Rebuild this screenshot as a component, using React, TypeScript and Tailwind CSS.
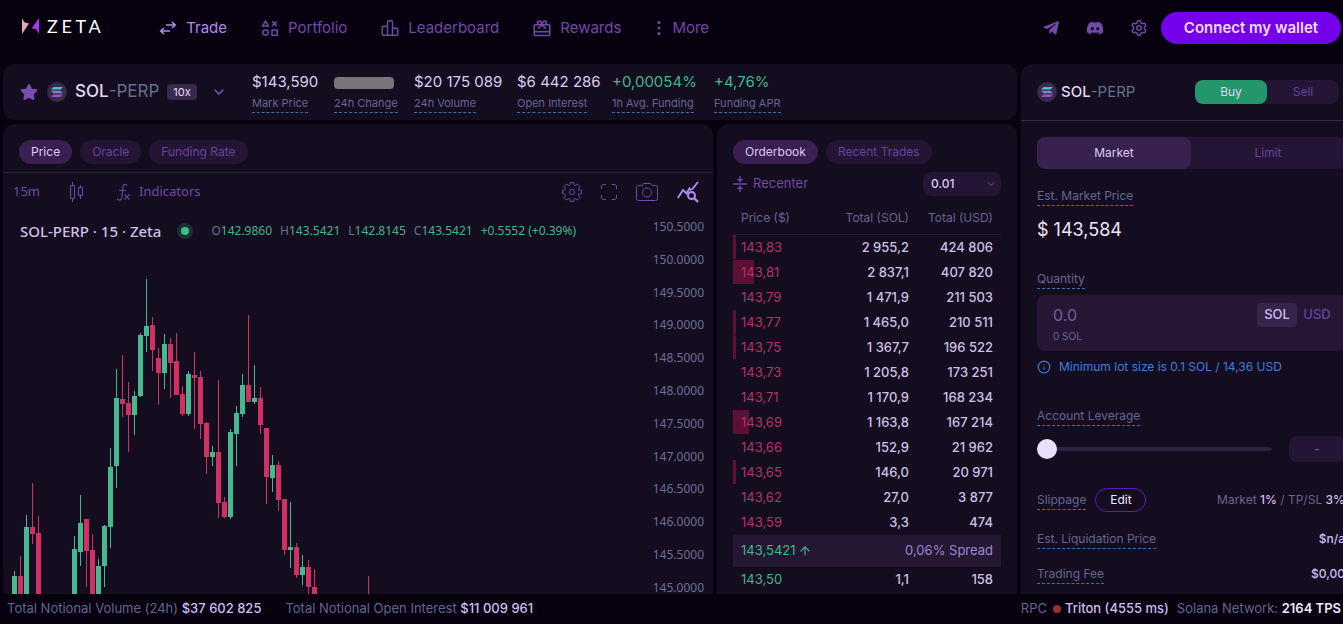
import { useState } from "react";
import type { ReactNode } from "react";
import { ArrowUp, ChevronDown, Info, Settings } from "lucide-react";
import { FaDiscord, FaStar, FaTelegramPlane } from "react-icons/fa";

type Candle = {
  slot: number;
  up?: boolean;
  body: [number, number];
  wick: [number, number];
};

const BOTTOM = 390;

const candles: Candle[] = [
  { slot: 0, up: true, body: [365, BOTTOM], wick: [360, BOTTOM] },
  { slot: 1, body: [365, BOTTOM], wick: [345, BOTTOM] },
  { slot: 2, up: true, body: [316, BOTTOM], wick: [304, BOTTOM] },
  { slot: 3, body: [316, 323], wick: [272, 333] },
  { slot: 4, body: [322, BOTTOM], wick: [305, BOTTOM] },
  { slot: 10, up: true, body: [338, BOTTOM], wick: [325, BOTTOM] },
  { slot: 11, up: true, body: [312, 341], wick: [284, 355] },
  { slot: 12, body: [308, 340], wick: [308, 376] },
  { slot: 13, body: [339, BOTTOM], wick: [323, BOTTOM] },
  { slot: 14, up: true, body: [355, BOTTOM], wick: [348, BOTTOM] },
  { slot: 15, up: true, body: [315, 355], wick: [314, 376] },
  { slot: 16, up: true, body: [256, 316], wick: [237, 337] },
  { slot: 17, up: true, body: [187, 255], wick: [158, 277] },
  { slot: 18, body: [188, 193], wick: [144, 206] },
  { slot: 19, body: [192, 204], wick: [171, 241] },
  { slot: 20, up: true, body: [185, 204], wick: [180, 224] },
  { slot: 21, up: true, body: [124, 185], wick: [122, 186] },
  { slot: 22, up: true, body: [115, 125], wick: [68, 141] },
  { slot: 23, body: [114, 139], wick: [106, 160] },
  { slot: 24, body: [147, 162], wick: [137, 194] },
  { slot: 25, up: true, body: [133, 162], wick: [123, 178] },
  { slot: 26, body: [133, 152], wick: [127, 187] },
  { slot: 27, body: [150, 184], wick: [122, 184] },
  { slot: 28, body: [183, 203], wick: [175, 205] },
  { slot: 29, up: true, body: [163, 203], wick: [160, 205] },
  { slot: 30, body: [164, 167], wick: [141, 218] },
  { slot: 31, body: [166, 213], wick: [160, 228] },
  { slot: 32, body: [212, 246], wick: [211, 263] },
  { slot: 33, up: true, body: [241, 246], wick: [235, 255] },
  { slot: 34, body: [241, 292], wick: [169, 307] },
  { slot: 35, body: [291, 306], wick: [286, 307] },
  { slot: 36, up: true, body: [221, 306], wick: [218, 308] },
  { slot: 37, up: true, body: [202, 223], wick: [195, 255] },
  { slot: 38, up: true, body: [174, 203], wick: [163, 206] },
  { slot: 39, body: [174, 191], wick: [104, 191] },
  { slot: 40, up: true, body: [187, 191], wick: [154, 193] },
  { slot: 41, body: [187, 214], wick: [176, 223] },
  { slot: 42, body: [217, 266], wick: [217, 293] },
  { slot: 43, up: true, body: [254, 267], wick: [244, 281] },
  { slot: 44, body: [254, 289], wick: [250, 300] },
  { slot: 45, body: [288, 339], wick: [288, 344] },
  { slot: 46, up: true, body: [336, 339], wick: [291, 357] },
  { slot: 47, body: [336, 364], wick: [332, 367] },
  { slot: 48, up: true, body: [356, 364], wick: [344, 374] },
  { slot: 49, body: [356, 376], wick: [349, BOTTOM] },
  { slot: 50, body: [376, BOTTOM], wick: [358, BOTTOM] },
  { slot: 59, body: [BOTTOM, BOTTOM], wick: [365, BOTTOM] },
];

const axisPrices = Array.from({ length: 12 }, (_, i) => 150.5 - i * 0.5);

const asks = [
  { price: "143,83", sol: "2 955,2", usd: "424 806", depth: 3 },
  { price: "143,81", sol: "2 837,1", usd: "407 820", depth: 21 },
  { price: "143,79", sol: "1 471,9", usd: "211 503", depth: 0 },
  { price: "143,77", sol: "1 465,0", usd: "210 511", depth: 3 },
  { price: "143,75", sol: "1 367,7", usd: "196 522", depth: 3 },
  { price: "143,73", sol: "1 205,8", usd: "173 251", depth: 0 },
  { price: "143,71", sol: "1 170,9", usd: "168 234", depth: 0 },
  { price: "143,69", sol: "1 163,8", usd: "167 214", depth: 16 },
  { price: "143,66", sol: "152,9", usd: "21 962", depth: 0 },
  { price: "143,65", sol: "146,0", usd: "20 971", depth: 3 },
  { price: "143,62", sol: "27,0", usd: "3 877", depth: 0 },
  { price: "143,59", sol: "3,3", usd: "474", depth: 0 },
];

const stats = [
  { label: "Mark Price", value: "$143,590", color: "text-[#dccdf3]" },
  { label: "24h Change", value: "", color: "" },
  { label: "24h Volume", value: "$20 175 089", color: "text-[#dccdf3]" },
  { label: "Open Interest", value: "$6 442 286", color: "text-[#dccdf3]" },
  { label: "1h Avg. Funding", value: "+0,00054%", color: "text-[#43b58c]" },
  { label: "Funding APR", value: "+4,76%", color: "text-[#43b58c]" },
];

const ohlc = [
  ["O", "142.9860"],
  ["H", "143.5421"],
  ["L", "142.8145"],
  ["C", "143.5421"],
];

const TradeIcon = () => (
  <svg className="h-[18px] w-[18px]" viewBox="0 0 18 18" fill="none" stroke="currentColor" strokeWidth="1.6">
    <path d="M7 6h9M13 3l3.2 3L13 9M11 12H2M5 9l-3.2 3L5 15" />
  </svg>
);

const PortfolioIcon = () => (
  <svg className="h-[18px] w-[18px]" viewBox="0 0 18 18" fill="none" stroke="currentColor" strokeWidth="1.5">
    <path d="M4.5 2.2 7.4 7H1.6zM11.2 2.400l4.600 4.600M15.800 2.400 11.200 7M11 11h5.200v5.200H11z" />
    <circle cx="4.5" cy="13.6" r="2.700" />
  </svg>
);

const LeaderboardIcon = () => (
  <svg className="h-[18px] w-[18px]" viewBox="0 0 18 18" fill="none" stroke="currentColor" strokeWidth="1.4" strokeLinejoin="round">
    <path d="M6.5 16.3V3.2q0-1.4 1.4-1.4h2.2q1.4 0 1.4 1.4v13.1M6.5 7.3H2.2Q1.2 7.3 1.2 8.3v7q0 1 1 1h13.6q1 0 1-1v-5q0-1-1-1h-4.3" />
  </svg>
);

const RewardsIcon = () => (
  <svg className="h-[18px] w-[18px]" viewBox="0 0 18 18" fill="none" stroke="currentColor" strokeWidth="1.5" strokeLinejoin="round">
    <path d="M2.2 5.7h13.6q1 0 1 1v8.6q0 1.2-1.2 1.2H2.4q-1.2 0-1.2-1.2V6.7q0-1 1-1zM1.2 12.7h15.6M9 5.7 5.2 9.8M9 5.7l3.8 4.1" />
    <path d="M9 5.2C8.4 3 7.4 2 6.2 2 3.9 2 4 5.2 6.2 5.4M9 5.2C9.6 3 10.6 2 11.8 2c2.3 0 2.2 3.2 0 3.4" />
  </svg>
);

const MoreIcon = () => (
  <svg className="h-[18px] w-2" viewBox="0 0 8 18" fill="currentColor">
    <circle cx="4" cy="3.5" r="1.5" />
    <circle cx="4" cy="9" r="1.5" />
    <circle cx="4" cy="14.5" r="1.5" />
  </svg>
);

const ZetaMark = () => (
  <svg className="h-4 w-[17px]" viewBox="0 0 17 16">
    <path d="M0 0v16L7 5.500 2.200 4.200z" fill="#e9a6b4" />
    <path d="M17 16V0L9.800 10.200l4.500 1z" fill="#a23af0" />
  </svg>
);

const SolanaLogo = () => (
  <svg className="h-5 w-5 shrink-0" viewBox="0 0 20 20">
    <circle cx="10" cy="10" r="10" fill="#392a4b" />
    <path d="M6.5 5H16l-2.500 2.600H4z" fill="#46bfc4" />
    <path d="M4 8.700h9.500l2.500 2.600H6.500z" fill="#7d82cf" />
    <path d="M6.5 12.400H16L13.500 15H4z" fill="#9c4ec6" />
  </svg>
);

const CandlesIcon = () => (
  <svg className="h-5 w-[18px]" viewBox="0 0 18 20" fill="none" stroke="currentColor">
    <path d="M2.5 3.5h4v13h-4zM4.5 0v3.5M4.5 16.500V20M10.500 5.500h4v8h-4zM12.500 3v2.500M12.500 13.500V17" />
  </svg>
);

const FormulaIcon = () => (
  <svg className="h-5 w-[15px]" viewBox="0 0 15 20" fill="none" stroke="currentColor" strokeWidth="1.1">
    <path d="M11 3.800C10.800 1.800 7.500 1.300 7 4.500L6 15.500C5.600 18.600 2 18.800 1.200 16.500M3 8.500h7M8.500 12.500l5 5M13.500 12.500l-5 5" />
  </svg>
);

const ChartGearIcon = () => (
  <svg className="h-5 w-5" viewBox="0 0 20 20" fill="none" stroke="currentColor" strokeLinejoin="round">
    <path d="M8.300.5h3.400l.4 2.500 1.300.5 2-1.500 2.500 2.500-1.500 2.100.6 1.300 2.500.4v3.400l-2.500.4-.6 1.300 1.500 2.100-2.500 2.500-2-1.500-1.300.500-.4 2.500H8.300L7.900 17l-1.300-.5-2.100 1.500L2 15.500l1.500-2.100-.5-1.300-2.500-.4V8.300L3 7.900l.5-1.300L2 4.500 4.500 2l2.100 1.500L7.900 3z" />
    <circle cx="10" cy="10" r="2.500" />
  </svg>
);

const FullscreenIcon = () => (
  <svg className="h-4 w-4" viewBox="0 0 16 16" fill="none" stroke="currentColor">
    <path d="M.5 5V2.500q0-2 2-2H5M11 .5h2.500q2 0 2 2V5M15.500 11v2.500q0 2-2 2H11M5 15.500H2.500q-2 0-2-2V11" />
  </svg>
);

const CameraIcon = () => (
  <svg className="h-[18px] w-[22px]" viewBox="0 0 22 18" fill="none" stroke="currentColor" strokeLinejoin="round">
    <path d="M7.500.5h7l1.500 2h3.500q2 0 2 2v11q0 2-2 2h-17q-2 0-2-2v-11q0-2 2-2H6z" />
    <circle cx="11" cy="9.500" r="4.500" />
  </svg>
);

const QueryStatsIcon = () => (
  <svg className="h-[22px] w-[22px]" viewBox="0 0 22 22" fill="none" stroke="currentColor" strokeWidth="2">
    <path d="M.8 17 6 9l3.500 3.500 3-5 2 1.800M15 8.500l6-7.500" />
    <circle cx="14.500" cy="14.500" r="3.500" />
    <path d="m17 17 4 4" strokeWidth="2.400" />
  </svg>
);

const RecenterIcon = () => (
  <svg className="h-4 w-3.5" viewBox="0 0 14 16" fill="none" stroke="currentColor" strokeWidth="1.4">
    <path d="M0 8h14M7 0v5M4.500 3 7 5.400 9.500 3M7 16v-5M4.500 13 7 10.600 9.500 13" />
  </svg>
);

const navItems = [
  { label: "Trade", icon: <TradeIcon />, active: true },
  { label: "Portfolio", icon: <PortfolioIcon /> },
  { label: "Leaderboard", icon: <LeaderboardIcon /> },
  { label: "Rewards", icon: <RewardsIcon /> },
  { label: "More", icon: <MoreIcon /> },
];

const Hint = ({ children }: { children: ReactNode }) => (
  <span className="inline-block whitespace-nowrap border-b border-dashed border-[#3c70ab] leading-[18px] text-[#646690]">
    {children}
  </span>
);

const PillTabs = ({ items }: { items: string[] }) => {
  const [active, setActive] = useState(items[0]);
  return (
    <div className="flex gap-2">
      {items.map((item) => (
        <button
          key={item}
          onClick={() => setActive(item)}
          className={`h-6 whitespace-nowrap rounded-full px-3 text-xs ${
            item === active
              ? "bg-[#391f52] text-[#dccdf3]"
              : "bg-[#231533] text-[#6a429f]"
          }`}
        >
          {item}
        </button>
      ))}
    </div>
  );
};

const MarketName = () => (
  <span className="whitespace-nowrap text-[#66718f]">
    <span className="font-medium text-[#e4d8f5]">SOL</span>-PERP
  </span>
);

const Header = () => (
  <header className="flex h-14 shrink-0 items-center pl-[22px] pr-0.5">
    <a href="#" className="flex items-center gap-2 pb-1 text-white" aria-label="Zeta">
      <ZetaMark />
      <span className="font-['Lato',sans-serif] text-lg tracking-[0.2em]">ZETA</span>
    </a>
    <nav className="ml-[55px] flex items-center gap-[34px]">
      {navItems.map((item) => (
        <a
          key={item.label}
          href="#"
          className={`flex items-center gap-[9px] text-[15px] ${
            item.active ? "text-[#b18af0]" : "text-[#704aa8]"
          }`}
        >
          {item.icon}
          {item.label}
        </a>
      ))}
    </nav>
    <div className="ml-auto flex items-center text-[#704aa8]">
      <div className="flex gap-[26px] pr-[13px]">
        <a href="#" aria-label="Telegram">
          <FaTelegramPlane className="h-[18px] w-[18px]" />
        </a>
        <a href="#" aria-label="Discord">
          <FaDiscord className="h-[18px] w-[18px]" />
        </a>
        <button aria-label="Settings">
          <Settings className="h-[18px] w-[18px]" />
        </button>
      </div>
      <button className="h-8 w-[180px] rounded-full bg-[#7500ea] text-[15px] font-semibold text-[#f0dcff]">
        Connect my wallet
      </button>
    </div>
  </header>
);

const MarketBar = () => (
  <section className="flex h-14 shrink-0 items-center rounded-xl bg-[#140c1f] pl-[17px]">
    <FaStar className="h-[18px] w-[18px] text-[#774fb2]" />
    <button className="ml-[9px] flex w-[180px] items-center text-[17px]">
      <SolanaLogo />
      <span className="ml-2">
        <MarketName />
      </span>
      <span className="ml-2 h-4 rounded bg-[#392a4b] px-1.5 text-[11px] leading-4 text-[#eadffa]">10x</span>
      <ChevronDown className="ml-auto h-4 w-4 text-[#8257c2]" />
    </button>
    <dl className="ml-[25px] grid grid-cols-[70px_68px_91px_83px_90px_75px] gap-3">
      {stats.map((stat) => (
        <div key={stat.label} className="flex flex-col-reverse">
          <dt className="text-[11px] leading-[18px]">
            <Hint>{stat.label}</Hint>
          </dt>
          <dd className={`flex h-[22px] items-center whitespace-nowrap text-[15px] ${stat.color}`}>
            {stat.value || <span className="h-3 w-[60px] rounded bg-[#77757b]" />}
          </dd>
        </div>
      ))}
    </dl>
  </section>
);

const PriceChart = () => (
  <section className="flex min-w-0 flex-1 flex-col overflow-hidden rounded-t-xl bg-[#140c1f]">
    <div className="border-b border-[#2e2638] px-4 pb-2 pt-4">
      <PillTabs items={["Price", "Oracle", "Funding Rate"]} />
    </div>
    <div className="flex h-[38px] shrink-0 items-center justify-between pl-2.5 pr-3.5 font-['Noto_Sans',sans-serif] text-[13px] text-[#704aa8]">
      <div className="flex items-center">
        <button>15m</button>
        <button aria-label="Candles" className="ml-7">
          <CandlesIcon />
        </button>
        <button className="ml-[30px] flex items-center gap-2">
          <FormulaIcon />
          Indicators
        </button>
      </div>
      <div className="flex items-center gap-[19px]">
        <button aria-label="Chart settings">
          <ChartGearIcon />
        </button>
        <button aria-label="Fullscreen">
          <FullscreenIcon />
        </button>
        <button aria-label="Take a snapshot">
          <CameraIcon />
        </button>
        <button aria-label="Search chart" className="text-[#b18af0]">
          <QueryStatsIcon />
        </button>
      </div>
    </div>
    <div className="relative flex min-h-0 flex-1 font-['Noto_Sans',sans-serif]">
      <svg className="h-full min-w-0 flex-1">
        {candles.map(({ slot, up, body, wick }) => (
          <g key={slot} fill={up ? "#48b890" : "#d03062"}>
            <rect x={11 + slot * 6} y={wick[0]} width={1} height={wick[1] - wick[0]} />
            <rect x={9 + slot * 6} y={body[0]} width={5} height={body[1] - body[0]} />
          </g>
        ))}
      </svg>
      <svg className="h-full w-[60px] shrink-0 text-xs" fill="#6c7094">
        {axisPrices.map((price, i) => (
          <text key={price} x={51} y={20 + Math.round(i * 32.8)} textAnchor="end">
            {price.toFixed(4)}
          </text>
        ))}
      </svg>
      <div className="absolute left-[17px] top-2 flex items-center whitespace-nowrap text-xs text-[#43b58c]">
        <span className="text-[15px] font-medium leading-6 text-[#cfc0e6]">SOL-PERP · 15 · Zeta</span>
        <span className="ml-4 flex h-4 w-4 items-center justify-center rounded-full bg-[#193234]">
          <span className="h-2 w-2 rounded-full bg-[#48b890]" />
        </span>
        <div className="ml-[18px] flex gap-2">
          {ohlc.map(([key, value]) => (
            <span key={key}>
              <span className="text-[#6c7094]">{key}</span>
              {value}
            </span>
          ))}
          <span>+0.5552 (+0.39%)</span>
        </div>
      </div>
    </div>
  </section>
);

const Orderbook = () => (
  <section className="w-[300px] shrink-0 overflow-hidden rounded-t-xl bg-[#140c1f] px-4 pt-4">
    <PillTabs items={["Orderbook", "Recent Trades"]} />
    <div className="mt-2 flex items-center justify-between text-[13px]">
      <button className="flex items-center gap-1.5 text-[#704aa8]">
        <RecenterIcon />
        Recenter
      </button>
      <div className="relative">
        <select
          aria-label="Price grouping"
          className="h-6 w-[78px] appearance-none rounded-lg bg-[#231533] pl-2 text-xs font-medium text-[#dccdf3]"
        >
          <option>0.01</option>
          <option>0.1</option>
        </select>
        <ChevronDown className="pointer-events-none absolute right-1 top-1.5 h-3 w-3 text-[#704aa8]" />
      </div>
    </div>
    <table className="mt-[5px] w-full border-separate border-spacing-0 text-[13px]">
      <thead>
        <tr className="text-xs text-[#646690]">
          <th className="h-[34px] border-b border-[#221a2d] pl-2 text-left font-normal">Price ($)</th>
          <th className="border-b border-[#221a2d] text-right font-normal">Total (SOL)</th>
          <th className="w-[92px] border-b border-[#221a2d] pr-2 text-right font-normal">Total (USD)</th>
        </tr>
      </thead>
      <tbody className="text-[#cfc0e6]">
        {asks.map((row) => (
          <tr key={row.price} className="h-[25px]">
            <td className="relative pl-2 text-[#b33467]">
              <span
                className="absolute inset-y-0 left-0 border-b border-[#140c1f] bg-[#5d0f34]"
                style={{ width: row.depth }}
              />
              <span className="relative">{row.price}</span>
            </td>
            <td className="text-right font-medium">{row.sol}</td>
            <td className="pr-2 text-right font-medium">{row.usd}</td>
          </tr>
        ))}
        <tr className="h-8 bg-[#231731]">
          <td className="pl-2 text-[#43b58c]">
            <span className="flex items-center gap-0.5">
              143,5421
              <ArrowUp className="h-3.5 w-3.5" />
            </span>
          </td>
          <td colSpan={2} className="pr-2 text-right text-[#a184d4]">
            0,06% Spread
          </td>
        </tr>
        <tr className="h-[25px]">
          <td className="pl-2 text-[#43b58c]">143,50</td>
          <td className="text-right font-medium">1,1</td>
          <td className="pr-2 text-right font-medium">158</td>
        </tr>
      </tbody>
    </table>
  </section>
);

const OrderForm = () => {
  const [side, setSide] = useState("Buy");
  const [orderType, setOrderType] = useState("Market");
  const [leverage, setLeverage] = useState(0);

  return (
    <section className="w-[340px] shrink-0 overflow-hidden rounded-t-xl bg-[#140c1f] text-xs">
      <div className="flex h-[57px] items-center border-b border-[#352d3f] pl-4 pr-[22px]">
        <SolanaLogo />
        <h2 className="ml-1 text-[15px]">
          <MarketName />
        </h2>
        <div className="ml-auto flex rounded-lg bg-[#231533]">
          {["Buy", "Sell"].map((item) => (
            <button
              key={item}
              onClick={() => setSide(item)}
              className={`h-6 w-[72px] rounded-lg ${
                item === side ? "bg-[#24966b] text-[#e0d3f2]" : "text-[#6a429f]"
              }`}
            >
              {item}
            </button>
          ))}
        </div>
      </div>
      <form className="flex flex-col p-4" onSubmit={(e) => e.preventDefault()}>
        <div className="flex rounded-lg bg-[#231533]">
          {["Market", "Limit"].map((item) => (
            <button
              key={item}
              type="button"
              onClick={() => setOrderType(item)}
              className={`h-8 flex-1 rounded-lg ${
                item === orderType ? "bg-[#38204f] text-[#dccdf3]" : "text-[#6a429f]"
              }`}
            >
              {item}
            </button>
          ))}
        </div>
        <div className="mt-[18px] flex">
          <Hint>Est. Market Price</Hint>
        </div>
        <p className="mt-3 text-lg leading-6 text-[#eee6fb]">$ 143,584</p>
        <label htmlFor="quantity" className="mt-7 flex">
          <Hint>Quantity</Hint>
        </label>
        <div className="mt-1.5 flex h-14 items-start justify-between rounded-lg bg-[#261634] pl-4 pr-2 pt-2">
          <div className="flex flex-col">
            <input
              id="quantity"
              placeholder="0.0"
              className="h-6 w-36 bg-transparent text-base text-[#dccdf3] outline-none placeholder:text-[#7b5a9e]"
            />
            <span className="text-[10px] leading-[18px] text-[#646690]">0 SOL</span>
          </div>
          <div className="flex text-[13px] font-medium">
            <button type="button" className="h-6 w-10 rounded bg-[#38244b] text-[#d3bdf0]">
              SOL
            </button>
            <button type="button" className="h-6 w-10 text-[#6a429f]">
              USD
            </button>
          </div>
        </div>
        <p className="mt-2 flex items-center gap-2 leading-4 text-[#3c7fdb]">
          <Info className="h-3.5 w-3.5" />
          Minimum lot size is 0.1 SOL / 14,36 USD
        </p>
        <label htmlFor="leverage" className="mt-8 flex">
          <Hint>Account Leverage</Hint>
        </label>
        <div className="mt-2.5 flex items-center gap-[17px]">
          <input
            id="leverage"
            type="range"
            min={0}
            max={10}
            value={leverage}
            onChange={(e) => setLeverage(Number(e.target.value))}
            className="h-1 min-w-0 flex-1 appearance-none rounded-full bg-[#2f2141] [&::-webkit-slider-thumb]:h-5 [&::-webkit-slider-thumb]:w-5 [&::-webkit-slider-thumb]:appearance-none [&::-webkit-slider-thumb]:rounded-full [&::-webkit-slider-thumb]:bg-[#e6e0fa]"
          />
          <output className="h-[26px] w-14 rounded-lg bg-[#231533] text-center leading-[26px] text-[#646690]">
            {leverage ? `${leverage}x` : "-"}
          </output>
        </div>
        <div className="mt-[26px] flex items-center text-[#646690]">
          <Hint>Slippage</Hint>
          <button type="button" className="ml-[9px] h-6 w-[51px] rounded-full border border-[#6617b8] text-[#f3ecff]">
            Edit
          </button>
          <span className="ml-auto whitespace-pre">
            Market <b className="font-medium text-[#d3bdf0]">1%</b> / TP/SL{" "}
            <b className="font-medium text-[#d3bdf0]">3%</b>
          </span>
        </div>
        <div className="mt-[18px] flex justify-between">
          <Hint>Est. Liquidation Price</Hint>
          <span className="font-medium leading-[18px] text-[#d3bdf0]">$n/a</span>
        </div>
        <div className="mt-4 flex justify-between">
          <Hint>Trading Fee</Hint>
          <span className="font-medium leading-[18px] text-[#d3bdf0]">$0,00</span>
        </div>
      </form>
    </section>
  );
};

const Footer = () => (
  <footer className="flex h-[30px] shrink-0 items-center justify-between whitespace-nowrap pl-[7px] pr-0.5 text-[13px] text-[#646690]">
    <div className="flex gap-6">
      <span>
        Total Notional Volume (24h) <b className="font-medium text-[#d3bdf0]">$37 602 825</b>
      </span>
      <span>
        Total Notional Open Interest <b className="font-medium text-[#d3bdf0]">$11 009 961</b>
      </span>
    </div>
    <div className="flex items-center gap-2">
      <span className="flex items-center">
        RPC
        <span className="ml-1.5 mr-1 h-2 w-2 rounded-full bg-[#9a302f]" />
        <b className="font-medium text-[#d3bdf0]">Triton (4555 ms)</b>
      </span>
      <span>
        Solana Network: <b className="font-semibold text-[#f0e8fb]">2164 TPS</b>
      </span>
    </div>
  </footer>
);

const App = () => {
  return (
    <div className="flex h-screen flex-col overflow-hidden bg-[#07000f] font-['Inter',sans-serif]">
      <Header />
      {/* the order form runs past the right edge of the window */}
      <main className="-mr-[18px] flex min-h-0 flex-1 gap-1 pl-[3px] pt-2">
        <div className="flex min-w-0 flex-1 flex-col gap-1">
          <MarketBar />
          <div className="flex min-h-0 flex-1 gap-1">
            <PriceChart />
            <Orderbook />
          </div>
        </div>
        <OrderForm />
      </main>
      <Footer />
    </div>
  );
};

export default App;
